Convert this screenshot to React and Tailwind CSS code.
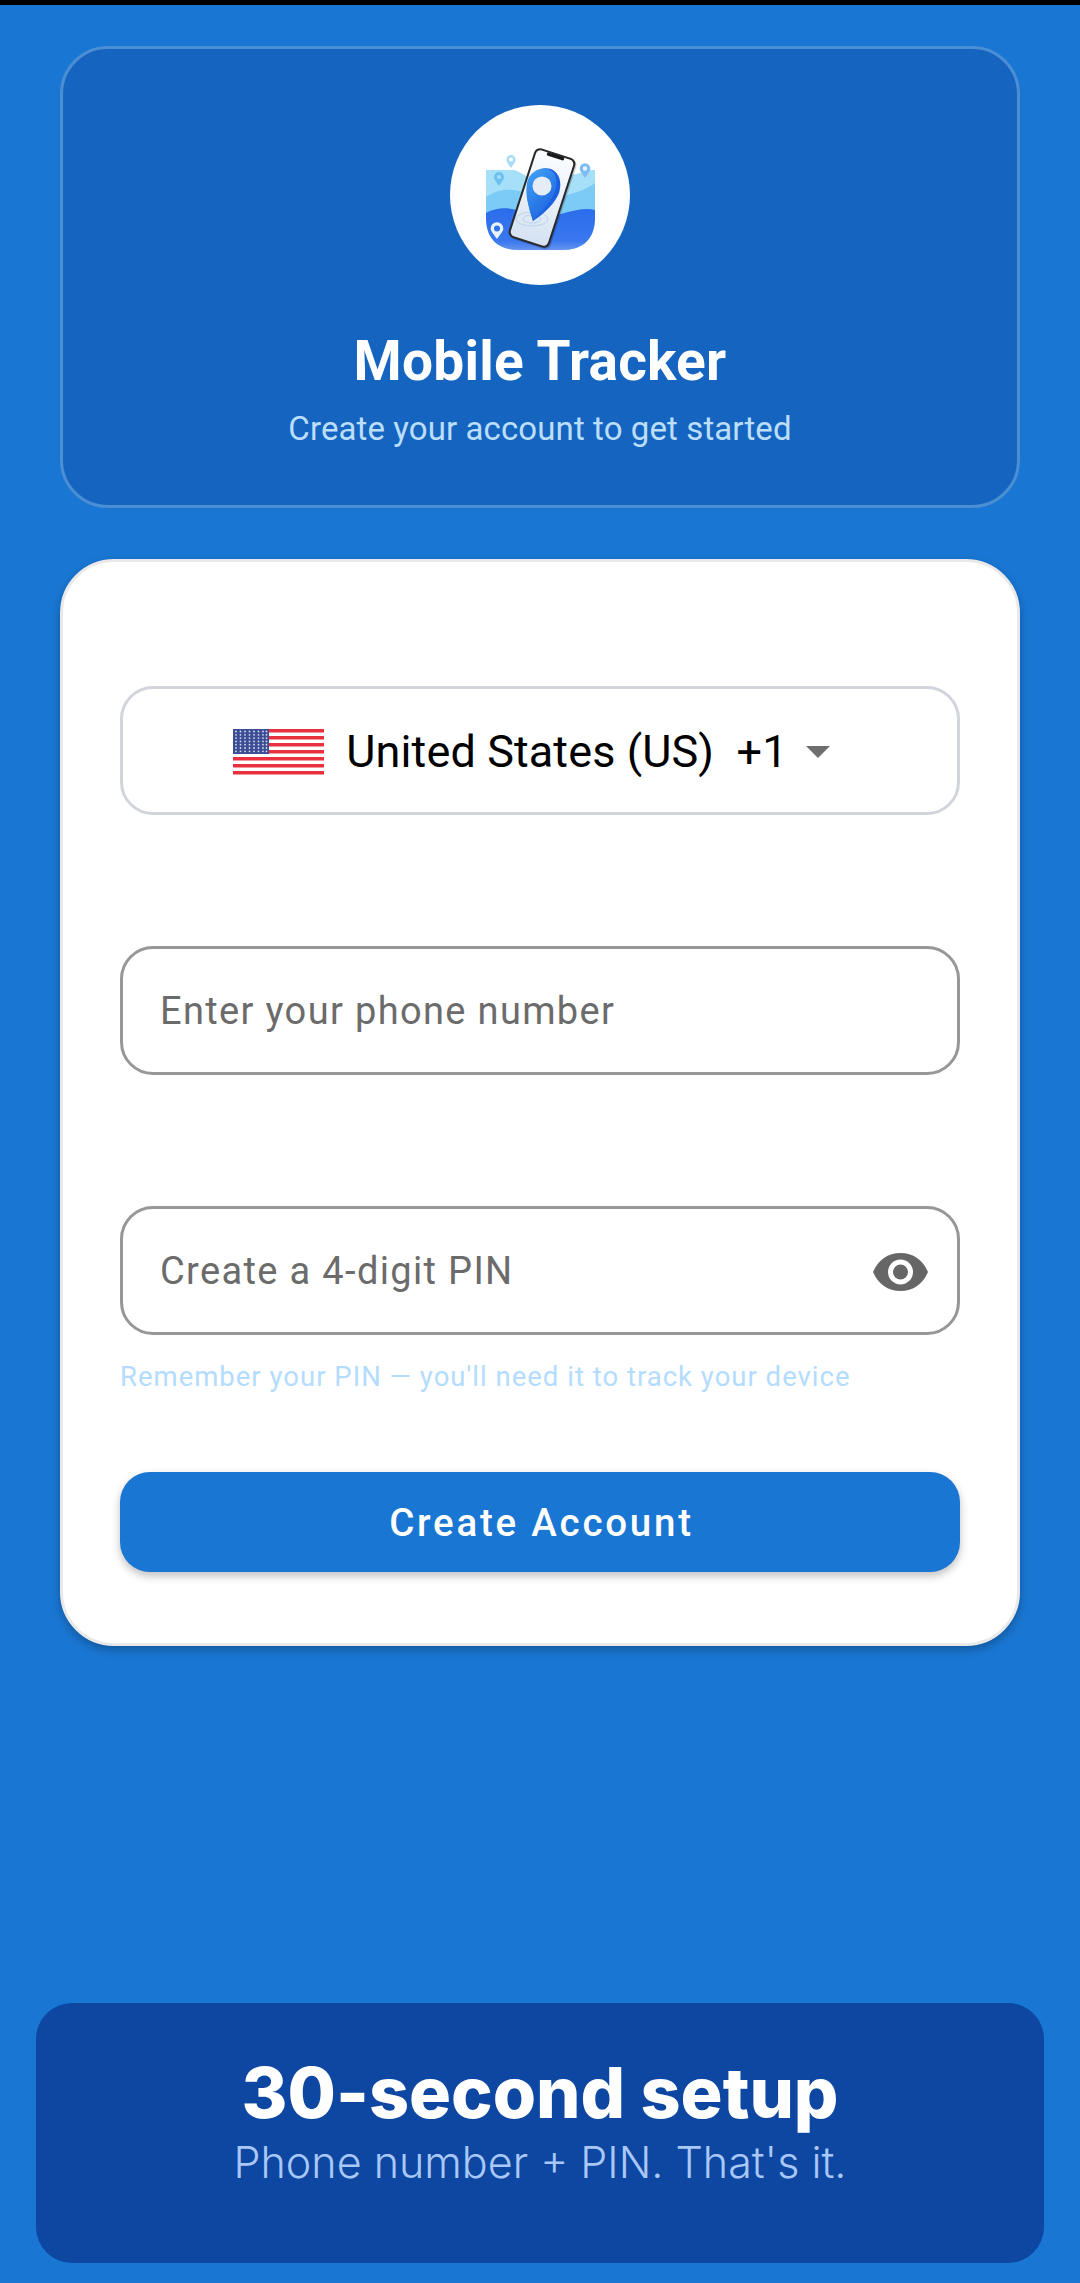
import React from 'react';

const roboto = { fontFamily: 'Roboto, sans-serif' };

const Logo = () => (
    <svg viewBox="0 0 180 180" className="w-[180px] h-[180px]">
        <defs>
            <linearGradient id="screen" x1="0" y1="0" x2="0" y2="1">
                <stop offset="0" stopColor="#fbfdff" />
                <stop offset="1" stopColor="#d5e2f2" />
            </linearGradient>
            <linearGradient id="pin" x1="0" y1="0" x2="0.6" y2="1">
                <stop offset="0" stopColor="#43a6f5" />
                <stop offset="1" stopColor="#1c62e0" />
            </linearGradient>
            <linearGradient id="deep" x1="0" y1="0" x2="0" y2="1">
                <stop offset="0" stopColor="#2b6cec" />
                <stop offset="0.7" stopColor="#3a78ee" />
                <stop offset="1" stopColor="#7fa2f0" />
            </linearGradient>
            <clipPath id="shield">
                <path d="M36 65 H145 V112 C145 134 133 145 112 145 H69 C48 145 36 134 36 112 Z" />
            </clipPath>
        </defs>

        {/* map waves */}
        <g clipPath="url(#shield)">
            <path d="M36 65 C50 60 62 62 78 72 C95 80 120 70 145 64 V150 H36 Z" fill="#a6dff8" />
            <path d="M36 92 C50 82 62 84 78 88 C100 94 125 92 145 78 V150 H36 Z" fill="#7ccbf7" />
            <path d="M36 108 C50 100 66 103 80 110 C100 118 125 100 145 105 V150 H36 Z" fill="url(#deep)" />
        </g>

        {/* small pins */}
        <path d="M61 63 C57.500 58 56.500 57 56.500 54.500 A4.500 4.500 0 0 1 65.500 54.500 C65.500 57 64.500 58 61 63 Z" fill="#a8dcf8" />
        <circle cx="61" cy="54.500" r="2" fill="#ffffff" />
        <path d="M49 81 C45 75 44 74 44 72 A5 5 0 0 1 54 72 C54 74 53 75 49 81 Z" fill="#6cc0f2" />
        <circle cx="49" cy="72" r="2" fill="#a6dff8" />
        <path d="M135 73 C131 67 129.700 66 129.700 63.500 A5.300 5.300 0 0 1 140.300 63.500 C140.300 66 139 67 135 73 Z" fill="#7fbdf0" />
        <circle cx="135" cy="63.500" r="2.200" fill="#e6f3fc" />
        <path d="M47 134 C42 127 40.700 126 40.700 123.500 A6.300 6.300 0 0 1 53.300 123.500 C53.300 126 52 127 47 134 Z" fill="#e8f3fd" />
        <circle cx="47" cy="123.500" r="3" fill="#2f74ee" />

        {/* phone */}
        <g transform="rotate(18 92 93)">
            <rect x="72" y="47" width="43" height="94" rx="6" fill="#000000" opacity="0.18" />
            <rect x="70.500" y="46" width="43" height="94" rx="6" fill="#2a2a2c" />
            <rect x="72.500" y="48" width="39" height="90" rx="4.500" fill="url(#screen)" />
            <rect x="83" y="47.500" width="18" height="3.500" rx="1.500" fill="#1a1a1c" />
        </g>

        {/* rings under the pin */}
        <g fill="none" stroke="#bcd3ea" strokeWidth="1">
            <ellipse cx="82" cy="114" rx="9" ry="4" />
            <ellipse cx="82" cy="114" rx="16" ry="7" />
        </g>

        {/* big pin */}
        <path d="M83 116 C78 100 76 90 78 78 C81 66 92 61 101 64 C110 68 112 78 109 88 C105 98 95 108 83 116 Z" fill="#1c5fe0" />
        <path d="M83 116 C78 100 75 90 77 78 C79 67 90 62 98 64 C107 67 108 77 105 86 C102 96 93 106 83 116 Z" fill="url(#pin)" />
        <circle cx="92" cy="81" r="9.500" fill="#e4ecf6" />
    </svg>
);

const UsFlag = () => (
    <svg viewBox="0 0 91 46" className="w-[91px] h-[46px] shrink-0">
        <rect width="91" height="46" fill="#ffffff" />
        {[0, 7, 14, 21, 28, 35, 42].map((y) => (
            <rect key={y} x="0" y={y} width="91" height="3.500" fill="#e8303f" />
        ))}
        <rect width="36" height="25" fill="#3b4d94" />
        {[2.500, 5.800, 9.100, 12.400, 15.700, 19, 22.300].map((y) =>
            [3, 7.500, 12, 16.500, 21, 25.500, 30, 33.500].map((x) => (
                <circle key={`${x}-${y}`} cx={x} cy={y} r="0.900" fill="#d5dcef" />
            ))
        )}
    </svg>
);

const App = () => {
    return (
        <div className="w-[1080px] h-[2283px] bg-[#1976d2] flex flex-col" style={roboto}>
            {/* status bar edge */}
            <div className="h-[5px] bg-black shrink-0" />

            {/* Header */}
            <div className="mx-[60px] mt-[41px] h-[462px] rounded-[48px] border-[3px] border-[#4b8ed3] bg-[#1565c0] flex flex-col items-center pt-[56px]">
                <div className="w-[180px] h-[180px] rounded-full bg-white">
                    <Logo />
                </div>
                <h1 className="mt-[43px] text-[55px] leading-[66px] font-bold tracking-[0.25px] text-white">Mobile Tracker</h1>
                <p className="mt-[15px] text-[33px] leading-[40px] tracking-[0.1px] text-[#bbdefb]">Create your account to get started</p>
            </div>

            {/* Form card */}
            <div className="mx-[60px] mt-[51px] h-[1087px] rounded-[54px] border-[3px] border-[#e9e9ec] bg-white px-[57px] pt-[124px] shadow-[0_4px_8px_rgba(0,0,0,0.25)]">
                <div className="h-[129px] rounded-[33px] border-[3px] border-[#d1d5db] flex items-center justify-center pr-[17px] pt-[2px]">
                    <UsFlag />
                    <span className="ml-[22px] text-[45px] tracking-[0.1px] text-black whitespace-pre">United States (US)  +1</span>
                    <svg viewBox="0 0 24 12" className="ml-[18px] w-[24px] h-[12px]">
                        <path d="M0 0 H24 L12 12 Z" fill="#6e6e6e" />
                    </svg>
                </div>

                <div className="mt-[131px] h-[129px] rounded-[33px] border-[3px] border-[#979797] flex items-center px-[37px] pt-[2px]">
                    <span className="text-[38px] tracking-[1.35px] text-[#6b6b6b]">Enter your phone number</span>
                </div>

                <div className="mt-[131px] h-[129px] rounded-[33px] border-[3px] border-[#979797] flex items-center justify-between pl-[37px] pr-[29px] pt-[2px]">
                    <span className="text-[38px] tracking-[1.35px] text-[#6b6b6b]">Create a 4-digit PIN</span>
                    <svg viewBox="0 0 55 38" className="w-[55px] h-[38px]">
                        <path d="M0 19 C5 7 15 0 27.500 0 C40 0 50 7 55 19 C50 31 40 38 27.500 38 C15 38 5 31 0 19 Z" fill="#666666" />
                        <circle cx="27.500" cy="19" r="12.500" fill="#ffffff" />
                        <circle cx="27.500" cy="19" r="7.500" fill="#666666" />
                    </svg>
                </div>

                <p className="mt-[24px] text-[27.5px] leading-[36px] tracking-[1px] text-[#b3dcff]">Remember your PIN — you'll need it to track your device</p>

                <button className="mt-[77px] w-full h-[100px] rounded-[30px] bg-[#1976d2] pt-[2px] pl-[3px] text-white text-[38.5px] font-medium tracking-[2.75px] shadow-[0_4px_8px_rgba(0,0,0,0.25)]">
                    Create Account
                </button>
            </div>

            {/* Bottom banner */}
            <div className="mt-auto mb-[20px] mx-[36px] h-[260px] rounded-[36px] bg-[#0d47a1] flex flex-col items-center pt-[50px]">
                <h2 className="text-[70px] leading-[80px] font-extrabold text-white" style={{ fontFamily: 'Inter, sans-serif' }}>30-second setup</h2>
                <p className="mt-[4px] text-[43px] leading-[50px] font-light text-[#a9c8f7]" style={{ fontFamily: 'Inter, sans-serif' }}>Phone number + PIN. That's it.</p>
            </div>
        </div>
    );
};

export default App;
